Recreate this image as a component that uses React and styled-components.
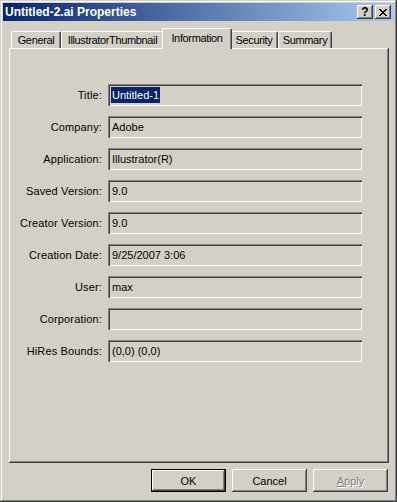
import React from 'react'
import styled, { createGlobalStyle } from 'styled-components'

const GlobalStyle = createGlobalStyle`
  html, body {
    margin: 0;
    padding: 0;
    background: #d4d0c8;
  }
  body {
    font-family: Tahoma, "Liberation Sans", Arial, sans-serif;
    font-size: 11px;
    color: #000;
  }
`

const Window = styled.div`
  width: 397px;
  height: 502px;
  box-sizing: border-box;
  padding: 3px;
  background: #d4d0c8;
  display: flex;
  flex-direction: column;
  box-shadow: inset -1px -1px #404040, inset 1px 1px #d4d0c8,
    inset -2px -2px #808080, inset 2px 2px #ffffff;
`

const TitleBar = styled.div`
  height: 18px;
  display: flex;
  align-items: center;
  padding: 0 3px 0 2px;
  background: linear-gradient(to right, #0a246a, #a6caf0);
`

const TitleText = styled.div`
  flex: 1;
  color: #fff;
  font-weight: bold;
  font-size: 12px;
`

const CaptionButtons = styled.div`
  display: flex;
  gap: 1px;
`

const CaptionButton = styled.div`
  width: 16px;
  height: 14px;
  box-sizing: border-box;
  background: #d4d0c8;
  display: flex;
  align-items: center;
  justify-content: center;
  font-weight: bold;
  font-size: 12px;
  line-height: 1;
  box-shadow: inset -1px -1px #404040, inset 1px 1px #ffffff,
    inset -2px -2px #808080;
`

const Body = styled.div`
  flex: 1;
  display: flex;
  flex-direction: column;
  padding: 7px 5px 0 6px;
`

const TabStrip = styled.div`
  height: 20px;
  display: flex;
  align-items: flex-end;
  padding-left: 2px;
  position: relative;
  z-index: 1;
`

const Tab = styled.div`
  width: ${p => p.$w}px;
  height: ${p => (p.$active ? 21 : 17)}px;
  margin: ${p => (p.$active ? '0 -2px -1px -2px' : '0')};
  box-sizing: border-box;
  background: #d4d0c8;
  display: flex;
  align-items: ${p => (p.$active ? 'flex-start' : 'center')};
  padding-top: ${p => (p.$active ? 3 : 0)}px;
  justify-content: center;
  white-space: nowrap;
  letter-spacing: -0.35px;
  border-radius: 2px 2px 0 0;
  border-top: 1px solid #fff;
  border-left: 1px solid #fff;
  border-right: 1px solid #404040;
  box-shadow: inset -1px 0 #808080;
  position: relative;
  z-index: ${p => (p.$active ? 2 : 1)};
`

const Panel = styled.div`
  height: 415px;
  box-sizing: border-box;
  padding: 36px 26px 0 1px;
  display: flex;
  flex-direction: column;
  gap: 10px;
  box-shadow: inset -1px -1px #404040, inset 1px 1px #ffffff,
    inset -2px -2px #808080;
`

const Row = styled.div`
  display: grid;
  grid-template-columns: 92px 254px;
  column-gap: 6px;
  align-items: center;
  height: 22px;
`

const Label = styled.div`
  text-align: right;
  white-space: nowrap;
  letter-spacing: 0.15px;
  padding-bottom: 1px;
`

const Field = styled.div`
  height: 22px;
  box-sizing: border-box;
  padding: 3px 3px 0 3px;
  display: flex;
  align-items: flex-start;
  box-shadow: inset 1px 1px #808080, inset 2px 2px #404040,
    inset -1px -1px #ffffff, inset -2px -2px #d4d0c8;
`

const Value = styled.span`
  line-height: 16px;
  padding: 0 1px;
  background: ${p => (p.$selected ? '#0a246a' : 'transparent')};
  color: ${p => (p.$selected ? '#fff' : '#000')};
`

const ButtonRow = styled.div`
  display: flex;
  justify-content: flex-end;
  gap: 6px;
  padding: 6px 1px 0 0;
`

const Button = styled.div`
  width: 75px;
  height: 23px;
  box-sizing: border-box;
  display: flex;
  align-items: center;
  justify-content: center;
  color: ${p => (p.$disabled ? '#808080' : '#000')};
  text-shadow: ${p => (p.$disabled ? '1px 1px #ffffff' : 'none')};
  box-shadow: ${p =>
    p.$default
      ? 'inset 0 0 0 1px #000, inset -2px -2px #404040, inset 2px 2px #ffffff, inset -3px -3px #808080'
      : 'inset -1px -1px #404040, inset 1px 1px #ffffff, inset -2px -2px #808080'};
`

const XIcon = () => (
  <svg width="8" height="7" viewBox="0 0 8 7" shapeRendering="crispEdges">
    <path
      d="M0 0h2v1h-2zM6 0h2v1h-2zM1 1h2v1h-2zM5 1h2v1h-2zM2 2h4v1h-4zM3 3h2v1h-2zM2 4h4v1h-4zM1 5h2v1h-2zM5 5h2v1h-2zM0 6h2v1h-2zM6 6h2v1h-2z"
      fill="#000"
    />
  </svg>
)

const tabs = [
  { name: 'General', w: 50 },
  { name: 'IllustratorThumbnail', w: 103 },
  { name: 'Information', w: 70, active: true },
  { name: 'Security', w: 48 },
  { name: 'Summary', w: 54 },
]

const rows = [
  ['Title:', 'Untitled-1', true],
  ['Company:', 'Adobe'],
  ['Application:', 'Illustrator(R)'],
  ['Saved Version:', '9.0'],
  ['Creator Version:', '9.0'],
  ['Creation Date:', '9/25/2007 3:06'],
  ['User:', 'max'],
  ['Corporation:', ''],
  ['HiRes Bounds:', '(0,0) (0,0)'],
]

function App() {
  return (
    <>
      <GlobalStyle />
      <Window>
        <TitleBar>
          <TitleText>Untitled-2.ai Properties</TitleText>
          <CaptionButtons>
            <CaptionButton>?</CaptionButton>
            <CaptionButton style={{ marginLeft: 1 }}>
              <XIcon />
            </CaptionButton>
          </CaptionButtons>
        </TitleBar>
        <Body>
          <TabStrip>
            {tabs.map(t => (
              <Tab key={t.name} $w={t.w} $active={t.active}>
                {t.name}
              </Tab>
            ))}
          </TabStrip>
          <Panel>
            {rows.map(([label, value, selected]) => (
              <Row key={label}>
                <Label>{label}</Label>
                <Field>
                  {value && <Value $selected={selected}>{value}</Value>}
                </Field>
              </Row>
            ))}
          </Panel>
          <ButtonRow>
            <Button $default>OK</Button>
            <Button>Cancel</Button>
            <Button $disabled>
              <span>
                <u>A</u>pply
              </span>
            </Button>
          </ButtonRow>
        </Body>
      </Window>
    </>
  )
}

export default App
